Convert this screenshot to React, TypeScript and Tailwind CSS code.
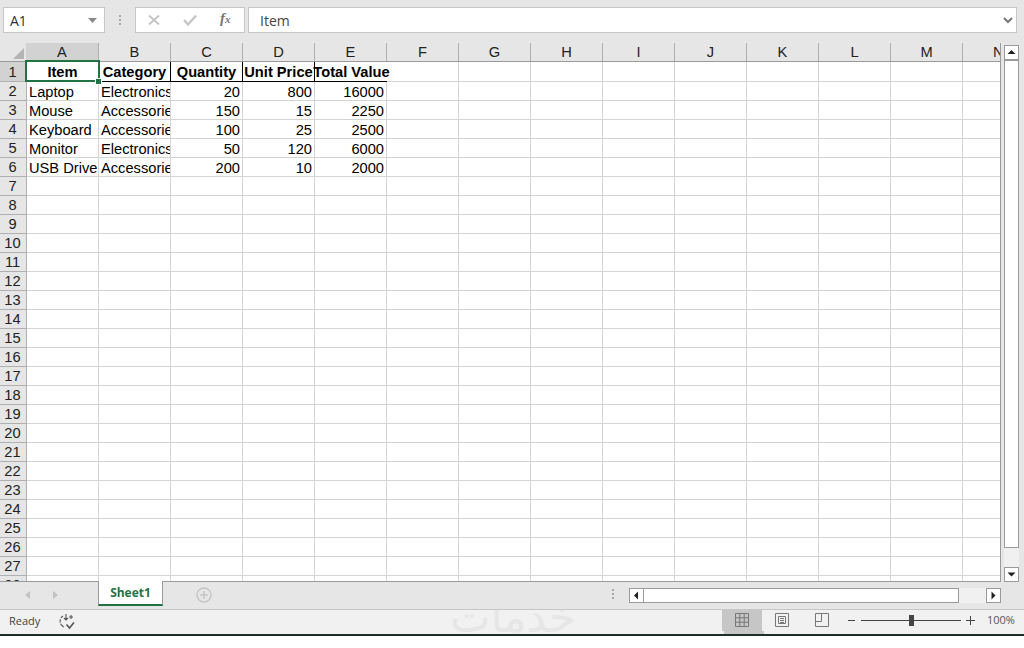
import React from 'react';

const COLUMNS = ['A', 'B', 'C', 'D', 'E', 'F', 'G', 'H', 'I', 'J', 'K', 'L', 'M', 'N'];
const ROW_COUNT = 28;

type Cell = { text: string; align: 'left' | 'right' };

const HEADERS = ['Item', 'Category', 'Quantity', 'Unit Price', 'Total Value'];

const DATA: Cell[][] = [
  ['Laptop', 'Electronics', '20', '800', '16000'],
  ['Mouse', 'Accessories', '150', '15', '2250'],
  ['Keyboard', 'Accessories', '100', '25', '2500'],
  ['Monitor', 'Electronics', '50', '120', '6000'],
  ['USB Drive', 'Accessories', '200', '10', '2000'],
].map((row) => row.map((text, i) => ({ text, align: i < 2 ? 'left' : 'right' })));

function ScrollButton({ dir }: { dir: 'up' | 'down' | 'left' | 'right' }) {
  const points = {
    up: '3.5,9 11.5,9 7.5,5',
    down: '3.5,5.5 11.5,5.5 7.5,9.5',
    left: '9,3.5 9,11.5 5,7.5',
    right: '5.5,3.5 5.5,11.5 9.5,7.5',
  }[dir];
  return (
    <div className="w-[15px] h-[15px] shrink-0 border border-[#9a9a9a] bg-white">
      <svg width="13" height="13" viewBox="1 1 13 13">
        <polygon points={points} fill="#222" />
      </svg>
    </div>
  );
}

function FormulaBar() {
  return (
    <div className="h-[43px] shrink-0 flex items-start pt-[7px] pl-[3px] bg-[#e6e6e6]">
      <div className="w-[102px] h-[26px] flex items-center justify-between pl-[6px] pr-[7px] bg-white border border-[#c6c6c6] font-['Open_Sans',sans-serif] text-[14px] text-[#333]">
        <span>A1</span>
        <svg width="9" height="5" viewBox="0 0 9 5">
          <polygon points="0,0 9,0 4.5,5" fill="#8a8a8a" />
        </svg>
      </div>
      <div className="w-[30px] h-[26px] flex flex-col items-center justify-center gap-[2px]">
        <span className="w-[2px] h-[2px] bg-[#a8a8a8]" />
        <span className="w-[2px] h-[2px] bg-[#a8a8a8]" />
        <span className="w-[2px] h-[2px] bg-[#a8a8a8]" />
      </div>
      <div className="w-[110px] h-[26px] flex items-center bg-white border border-[#c6c6c6]">
        <svg className="ml-[12px]" width="12" height="12" viewBox="0 0 12 12">
          <path d="M1 1.5 L11 10.5 M11 1.5 L1 10.5" stroke="#c4c4c4" strokeWidth="1.8" fill="none" />
        </svg>
        <svg className="ml-[23px]" width="14" height="12" viewBox="0 0 14 12">
          <path d="M1 6 L5 10.5 L13 1.5" stroke="#c4c4c4" strokeWidth="2.2" fill="none" />
        </svg>
        <span className="ml-[23px] -mt-[3px] font-['Liberation_Serif',serif] italic font-bold text-[15px] leading-none text-[#777]">
          f<span className="text-[11px]">x</span>
        </span>
      </div>
      <div className="ml-[3px] w-[769px] h-[26px] flex items-center justify-between pl-[11px] pr-[3px] bg-white border border-[#c6c6c6] font-['Open_Sans',sans-serif] text-[14px] text-[#444]">
        <span>Item</span>
        <svg width="10" height="7" viewBox="0 0 10 7">
          <path d="M1 1 L5 5 L9 1" stroke="#777" strokeWidth="2" fill="none" />
        </svg>
      </div>
    </div>
  );
}

function ColumnHeaders() {
  return (
    <div className="h-[19px] shrink-0 flex bg-[#e6e6e6] border-b border-[#9a9a9a] font-['Liberation_Sans',Arial,sans-serif] text-[14.67px] text-[#222]">
      <div className="w-[27px] shrink-0 flex items-end justify-end pr-[3px] pb-[2px]">
        <svg width="11" height="11" viewBox="0 0 11 11">
          <polygon points="11,0 11,11 0,11" fill="#b4b4b4" />
        </svg>
      </div>
      {COLUMNS.map((col, i) => (
        <div
          key={col}
          className={`w-[72px] shrink-0 flex items-center justify-center border-r border-[#b0b0b0] overflow-hidden last:w-[37px] last:border-r-0 last:justify-start last:pl-[30px] ${
            i === 0 ? 'bg-[#d2d2d2] -ml-px w-[73px]' : ''
          }`}
        >
          {col}
        </div>
      ))}
    </div>
  );
}

function Row({ index }: { index: number }) {
  const isHeader = index === 0;
  const values = DATA[index - 1];
  return (
    <div className={`flex shrink-0 ${isHeader ? 'h-[20px]' : 'h-[19px]'}`}>
      <div
        className={`w-[27px] shrink-0 flex items-center justify-center pr-px border-r border-b border-[#b0b0b0] text-[#222] ${
          isHeader ? 'bg-[#d2d2d2]' : 'bg-[#e6e6e6]'
        }`}
      >
        {index + 1}
      </div>
      {COLUMNS.map((col, c) => {
        const last = c === COLUMNS.length - 1;
        const widthClass = last ? 'w-[37px]' : 'w-[72px]';
        if (isHeader && c < 5) {
          return (
            <div
              key={col}
              className={`w-[72px] shrink-0 flex items-center justify-center whitespace-nowrap font-bold border-b border-black ${
                c === 4 ? 'relative z-[1] pl-px' : 'border-r'
              }`}
            >
              {HEADERS[c]}
            </div>
          );
        }
        const cell = values?.[c];
        return (
          <div
            key={col}
            className={`${widthClass} shrink-0 flex items-center pt-[2px] whitespace-nowrap overflow-hidden border-b border-[#d4d4d4] ${
              last ? '' : 'border-r'
            } ${cell?.align === 'right' ? 'justify-end pr-[2px]' : 'pl-[2px]'}`}
          >
            {cell?.text}
          </div>
        );
      })}
    </div>
  );
}

function VerticalScrollbar() {
  return (
    <div className="flex-1 flex flex-col pl-[3px] pt-[2px]">
      <ScrollButton dir="up" />
      <div className="w-[15px] h-[488px] shrink-0 border border-[#9a9a9a] bg-white" />
      <div className="w-[15px] h-[19px] shrink-0 bg-[#f0f0f0]" />
      <ScrollButton dir="down" />
    </div>
  );
}

function TabStrip() {
  return (
    <div className="h-[28px] shrink-0 flex items-start bg-[#e6e6e6] border-b border-[#c6c6c6]">
      <div className="w-[98px] h-[25px] shrink-0 flex items-center pl-[25px] gap-[23px]">
        <svg width="5" height="8" viewBox="0 0 5 8">
          <polygon points="5,0 5,8 0,4" fill="#c2c2c2" />
        </svg>
        <svg width="5" height="8" viewBox="0 0 5 8">
          <polygon points="0,0 0,8 5,4" fill="#c2c2c2" />
        </svg>
      </div>
      <div className="relative z-[1] -mt-px w-[65px] h-[25px] shrink-0 flex items-center justify-center bg-white border-x border-[#9a9a9a] border-b-2 border-b-[#217346] font-['Open_Sans',sans-serif] font-bold text-[12px] text-[#217346]">
        Sheet1
      </div>
      <div className="w-[33px] shrink-0" />
      <svg className="mt-[5px] shrink-0" width="16" height="16" viewBox="0 0 16 16">
        <circle cx="8" cy="8" r="7" fill="none" stroke="#c6c6c6" strokeWidth="1.5" />
        <path d="M8 4 V12 M4 8 H12" stroke="#c6c6c6" strokeWidth="1.5" />
      </svg>
      <div className="w-[402px] shrink-0 h-[24px] flex flex-col items-end justify-center gap-[2px]">
        <span className="w-[2px] h-[2px] bg-[#a8a8a8]" />
        <span className="w-[2px] h-[2px] bg-[#a8a8a8]" />
        <span className="w-[2px] h-[2px] bg-[#a8a8a8]" />
      </div>
      <div className="ml-[15px] mt-[6px] w-[372px] flex shrink-0">
        <ScrollButton dir="left" />
        <div className="w-[316px] h-[15px] shrink-0 -ml-px border border-[#9a9a9a] bg-white" />
        <div className="flex-1 h-[15px] bg-[#f0f0f0]" />
        <ScrollButton dir="right" />
      </div>
    </div>
  );
}

function StatusBar() {
  return (
    <div className="relative h-[24px] shrink-0 flex items-center bg-[#f1f1f1] font-['Open_Sans',sans-serif] text-[11px] text-[#444] overflow-hidden">
      <span className="ml-[9px] -mt-[2px]">Ready</span>
      <svg className="ml-[18px] -mt-[2px]" width="17" height="17" viewBox="0 0 17 17" fill="none" stroke="#555" strokeWidth="1.1">
        <path d="M5 3 A6 6 0 0 0 3.5 12 M3.5 12 L6 14.5" strokeDasharray="3 1.2" />
        <path d="M8 1 V7 M6 5 L8 7 L10 5 M11 4 H15 M13 2 V6" />
        <path d="M8.5 11.5 L11.5 15 L16 9.5" strokeWidth="1.6" />
      </svg>
      {/* watermark sits faintly under the status bar */}
      <span className="absolute left-[450px] top-[-23px] font-['DejaVu_Sans',sans-serif] text-[43px] leading-[60px] text-[#e6e6e6]">
        خدمات
      </span>
      <div className="absolute left-[722px] top-0 w-[40px] h-[21px] bg-[#c6c6c6]" />
      <div className="absolute left-[724px] top-[21px] w-[40px] h-[3px] bg-[#c6c6c6]" />
      <svg className="absolute left-[735px] top-[3px]" width="14" height="14" viewBox="0 0 14 14" fill="none" stroke="#777" strokeWidth="1">
        <path d="M.5 .5 H13.5 V13.5 H.5 Z M.5 4.8 H13.5 M.5 9.2 H13.5 M4.8 .5 V13.5 M9.2 .5 V13.5" />
      </svg>
      <svg className="absolute left-[775px] top-[3px]" width="14" height="14" viewBox="0 0 14 14" fill="none" stroke="#777" strokeWidth="1">
        <path d="M.5 .5 H13.5 V13.5 H.5 Z" />
        <path d="M3.5 3.5 H10.5 V10.5 H3.5 Z M5 5.5 H9 M5 7.5 H9 M5 9.5 H9" strokeWidth="1" />
      </svg>
      <svg className="absolute left-[815px] top-[3px]" width="14" height="14" viewBox="0 0 14 14" fill="none" stroke="#777" strokeWidth="1">
        <path d="M.5 .5 H13.5 V13.5 H.5 Z M.5 8.5 H6.5 V.5" />
      </svg>
      <div className="absolute left-[848px] top-[10px] w-[7px] h-px bg-[#444]" />
      <div className="absolute left-[861px] top-[10px] w-[100px] h-px bg-[#444]" />
      <div className="absolute left-[909px] top-[5px] w-[5px] h-[11px] bg-[#444]" />
      <svg className="absolute left-[966px] top-[6px]" width="9" height="9" viewBox="0 0 9 9">
        <path d="M0 4.5 H9 M4.5 0 V9" stroke="#444" strokeWidth="1" />
      </svg>
      <span className="absolute left-[987px] top-[2px] text-[#555]">100%</span>
    </div>
  );
}

export default function App() {
  return (
    <div className="w-[1024px] h-[648px] flex flex-col bg-white overflow-hidden">
      <FormulaBar />
      <div className="h-[539px] shrink-0 flex bg-[#e6e6e6]">
        <div className="relative w-[1001px] shrink-0 flex flex-col border-r border-b border-[#9a9a9a] bg-white">
          <ColumnHeaders />
          <div className="flex-1 flex flex-col overflow-hidden font-['Liberation_Sans',Arial,sans-serif] text-[14.67px] text-black">
            {Array.from({ length: ROW_COUNT }, (_, i) => (
              <Row key={i} index={i} />
            ))}
          </div>
          {/* active cell A1 */}
          <div className="absolute left-[25px] top-[17px] w-[75px] h-[22px] border-2 border-[#217346] pointer-events-none" />
          <div className="absolute left-[95px] top-[35px] w-[7px] h-[7px] bg-[#217346] border border-white pointer-events-none" />
        </div>
        <VerticalScrollbar />
      </div>
      <TabStrip />
      <StatusBar />
      <div className="h-[2px] shrink-0 bg-[#1f2d27]" />
    </div>
  );
}
